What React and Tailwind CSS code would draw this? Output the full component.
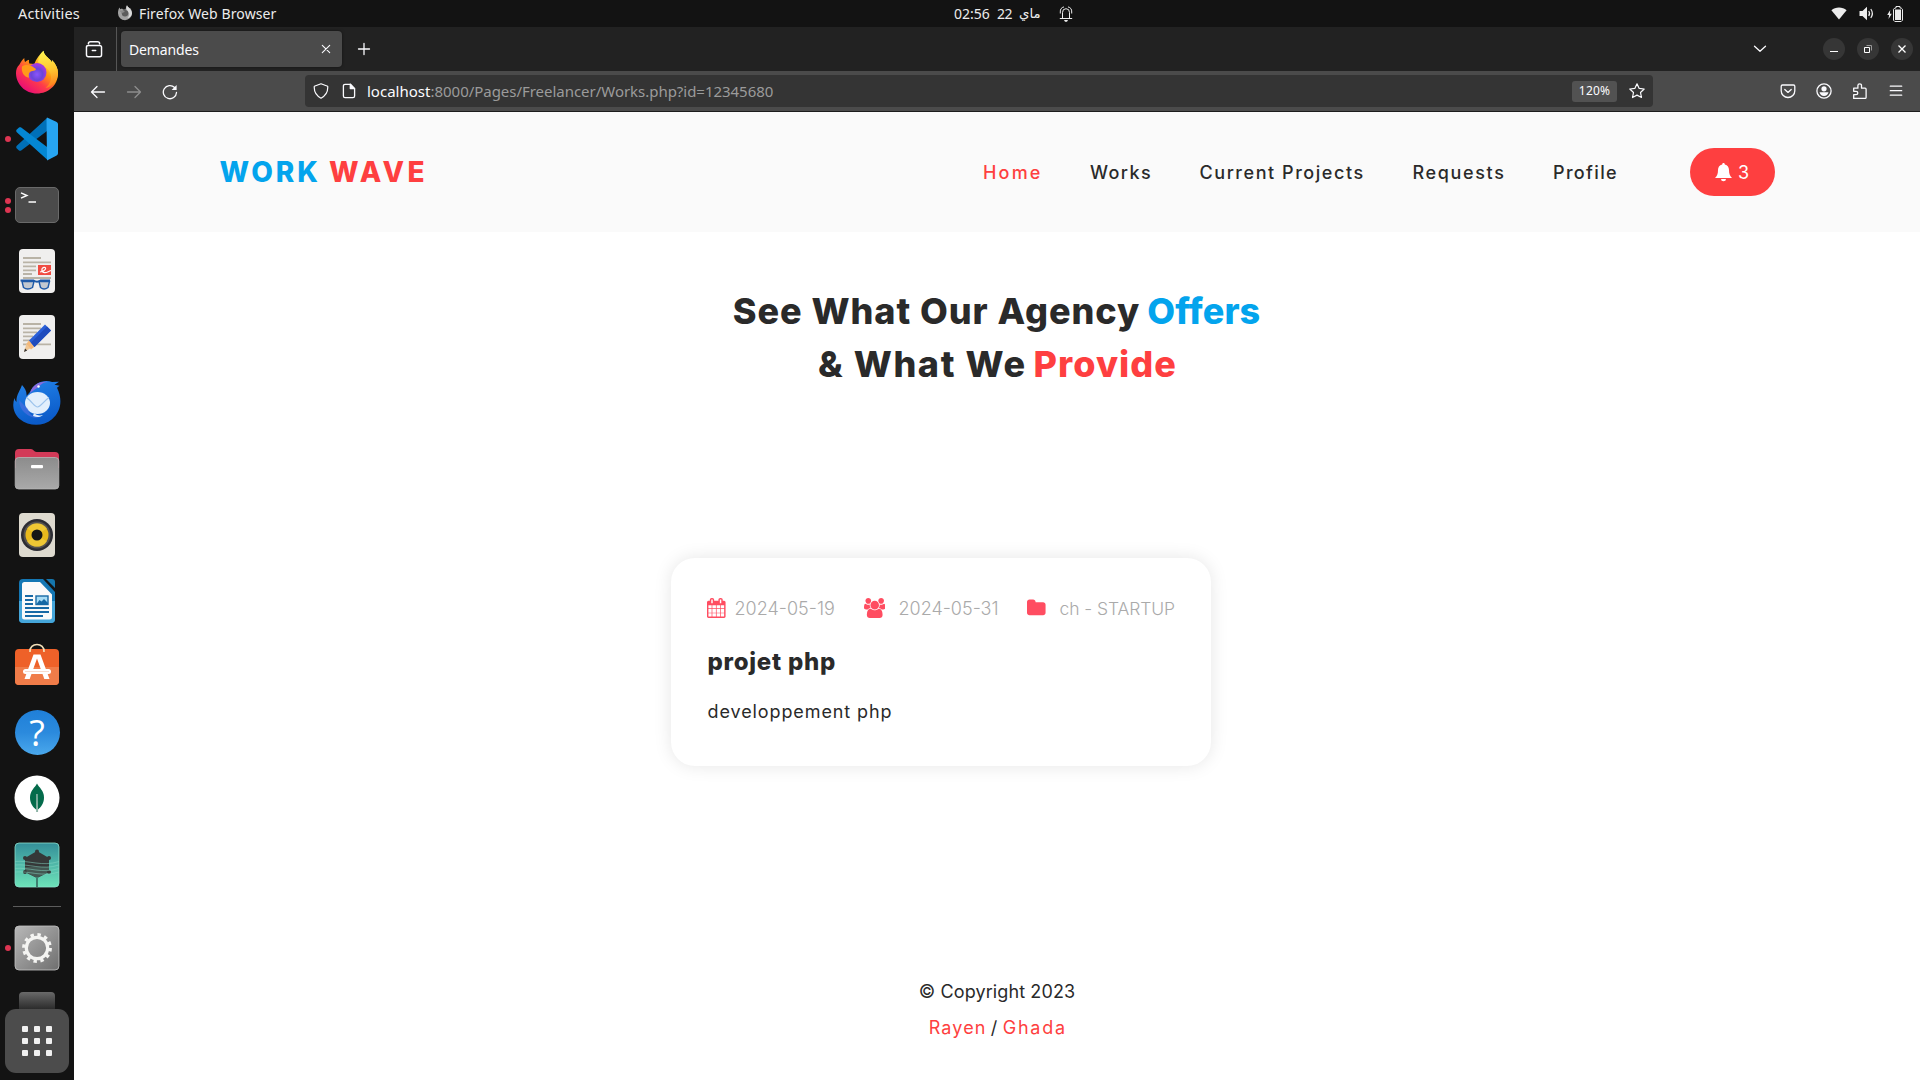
import React from "react";

const UI = "font-['Noto_Sans','DejaVu_Sans',sans-serif]";

function Line({ children, className = "", size = 16, w = 1.2 }) {
  return (
    <svg width={size} height={size} viewBox="0 0 16 16" fill="none" stroke="currentColor" strokeWidth={w} strokeLinecap="round" strokeLinejoin="round" className={"shrink-0 " + className}>
      {children}
    </svg>
  );
}

function TopBar() {
  return (
    <div className="relative flex h-[27px] w-full items-center bg-[#131313] text-[14px] leading-[27px] text-[#ececec] whitespace-nowrap">
      <span className="ml-[18px] w-[99px] text-[14.5px] tracking-[0.15px]">Activities</span>
      <svg width="16" height="16" viewBox="0 0 16 16" className="-mt-px shrink-0">
        <path d="M1.600 4.200 2.400 2.600l1 1.600 1.600-.6L6 4.600h2.600C9 2.600 9.400 1.300 10 .2c.5 1.500 1.600 2 2.500 3l.6-.3c1.300 1.700 1.900 3.300 1.900 5.200A7 7 0 0 1 1 8.200c0-1.400.1-2.700.6-4z" fill="#a2a2a2" />
        <path d="M10 .2c.5 1.500 1.600 2 2.500 3 1.900 2 2.500 4 2.500 5.500-.5 2.500-3 4.500-4.500 4.300 2.200-2 2.300-5 .5-6.500C9 5 9 2 10 .2z" fill="#dadada" />
        <circle cx="8" cy="8.200" r="3.200" fill="#5c5c5c" />
        <path d="M2.500 5.800c2-.7 4-.2 5.500.9-1.500 1-2.300.5-3 1.800z" fill="#8b8b8b" />
      </svg>
      <span className="ml-[6px] w-[815px] tracking-[0.11px]">Firefox Web Browser</span>
      <span className="w-[43px]">02:56</span>
      <span className="w-[22px] tracking-[-0.4px]">22</span>
      <span className="w-[40px] text-[13.3px] font-['DejaVu_Sans',sans-serif]">ماي</span>
      <svg width="14" height="16" viewBox="0 0 14 16" fill="none" stroke="#ececec" strokeWidth="1" className="shrink-0">
        <path d="M.8 12.500h12.400M3.500 12.500V6.500a3.500 3.800 0 0 1 7 0v6M1.300 7.500V6A4.700 4.900 0 0 1 5 .9M12.700 7.500V6A4.700 4.900 0 0 0 9 .9" />
        <path d="M5 14h4l-1 1.700H6z" fill="#ececec" stroke="none" />
      </svg>
      <div className="ml-auto flex items-center pr-[17px] text-[#ececec]">
        <svg width="16" height="13" viewBox="0 0 16 13" fill="currentColor"><path d="M.4 3.200C4.400-.5 11.600-.5 15.600 3.200L8 12.600z" /></svg>
        <svg width="16" height="15" viewBox="0 0 16 15" fill="currentColor" className="ml-[12px]">
          <path d="M.5 5h3L8 .8v13.400L3.500 10h-3z" />
          <path d="M9.700 5q1.800 2.500 0 5M11.800 3q3.200 4.500 0 9" fill="none" stroke="currentColor" strokeWidth="1.200" />
        </svg>
        <svg width="16" height="16" viewBox="0 0 16 16" fill="currentColor" className="ml-[12px]">
          <path d="M3.200 4 .2 9h1.900L1.500 13l3.300-5.300H2.900z" />
          <path d="M9 .5h4V2h1.200L15.500 3.300v10.900L14.200 15.500H7.800L6.500 14.200V3.300L7.800 2H9z" fill="none" stroke="currentColor" />
          <rect x="8" y="3.500" width="6" height="10.500" />
        </svg>
      </div>
    </div>
  );
}

function Firefox() {
  return (
    <svg width="44" height="44" viewBox="0 0 44 44" className="-mt-[2px]">
      <defs>
        <linearGradient id="ff1" x1=".85" y1=".1" x2=".2" y2=".95"><stop offset=".1" stopColor="#fff44f" /><stop offset=".4" stopColor="#ff980e" /><stop offset=".65" stopColor="#ff3b4a" /><stop offset="1" stopColor="#e60a79" /></linearGradient>
        <linearGradient id="ff2" x1=".5" y1="0" x2=".6" y2="1"><stop offset="0" stopColor="#fff350" /><stop offset=".5" stopColor="#ffc830" /><stop offset="1" stopColor="#ff7a1c" /></linearGradient>
        <radialGradient id="ff3" cx=".5" cy=".6"><stop offset="0" stopColor="#8a55fb" /><stop offset=".6" stopColor="#6a45d8" /><stop offset="1" stopColor="#a03ae0" /></radialGradient>
      </defs>
      <path d="M4.500 14.500C6 11.500 7.500 9.500 9.300 8c0 1.800.3 3 .8 4 1.300-1.100 2.600-1.800 4-2.200-.3 1.300-.2 2.600.2 3.600l5 .6C21 9 25 4 28.500.8c.5 4.200 3.500 6 5.800 8.200 1 .9 2 2.200 2.400 3.200.4-.8.4-1.400.2-2.200 4 4 6.100 8.500 6.100 13.500C43 35 33.500 43.500 22 43.500S1 34.500 1 23c0-3.200.8-6 3.500-8.500z" fill="url(#ff1)" />
      <path d="M28.500.8c.5 4.200 3.500 6 5.800 8.200 1 .9 2 2.200 2.400 3.200.4-.8.4-1.400.2-2.200 4 4 6.100 8.500 6.100 13.500-.6 8-6.500 13.500-12.500 14.500 5-4 7-10 4.500-15.500C33 17.500 27 16 23 12c1-5 3-8.800 5.500-11.200z" fill="url(#ff2)" />
      <circle cx="22" cy="22.500" r="9.500" fill="url(#ff3)" />
      <path d="M7 16.500c4-2.500 9-1.500 12.500 1.500 1.700.8 1.700 1.700.8 2.300-1.800.8-3.800.8-5 1.400-1.600 1-1.800 3.300-1.300 6C9 27 6 22 7 16.500z" fill="#ff9a1a" />
    </svg>
  );
}

function VSCode() {
  return (
    <svg width="44" height="44" viewBox="0 0 44 44">
      <path d="M31.500 1.500 1.800 28.800c-.8.8-.8 1.900 0 2.600l2.200 2c.6.6 1.500.6 2.200.1L36 11z" fill="#0070b8" />
      <path d="M32 42.500 1.800 15.200c-.8-.7-.8-1.900 0-2.600l2.200-2c.6-.6 1.500-.6 2.200-.1L36 33z" fill="#0487d3" />
      <path d="M31.500 1.500 32 .5l9.200 4.200c1.100.5 1.800 1.400 1.800 2.500v29c0 1.100-.7 2-1.800 2.500L32 43.400z" fill="#27a5f2" />
    </svg>
  );
}

function Terminal() {
  return (
    <div className="h-[36px] w-[44px] rounded-[5px] border border-[#6a6a6a] bg-[#4b4b4b]">
      <svg width="42" height="34" viewBox="0 0 42 34" fill="none" stroke="#fff" strokeWidth="1.400"><path d="M5 4.800l6 2.700-6 2.700M12.500 14h7.500" /></svg>
    </div>
  );
}

function Evince() {
  return (
    <svg width="44" height="46" viewBox="0 0 44 46">
      <rect x="4" y="1" width="36" height="44" rx="4" fill="#f0efee" />
      <path d="M8 10h18M8 14.300h28M8 18.300h13M8 22.300h13M8 26h9M8 30h28" stroke="#b9b3a6" strokeWidth="1.800" />
      <rect x="23" y="17" width="13" height="10" fill="#f04c42" />
      <path d="M25 24c6-1 7-5 4-4.600-3 .6-3 5.600 1 5.200 2 0 3-1 6-2" fill="none" stroke="#fff" strokeWidth="1.100" />
      <path d="M5.500 32.500h13q3.500 2.500 7 0h9.500" fill="none" stroke="#1e5aa8" strokeWidth="1.800" />
      <path d="M7 33.500h12l-1.500 6q-5 3-9 0zM24 33.500h10.500l-1.500 6q-4 3-7.500 0z" fill="#c3c9d0" stroke="#1e5aa8" strokeWidth="1.400" />
    </svg>
  );
}

function TextEditor() {
  return (
    <svg width="44" height="46" viewBox="0 0 44 46">
      <rect x="4" y="1" width="36" height="44" rx="4" fill="#f0efee" />
      <path d="M8 10h18M8 14.300h18M8 18.300h14M8 22.300h10M8 26.300h8M8 30.300h28" stroke="#b9b3a6" strokeWidth="1.800" />
      <path d="M9 38l2.500-8.500L16 34z" fill="#f0c795" />
      <path d="M11.500 29.500l3-3.500 6 6-4.500 3.500z" fill="#f5b878" />
      <path d="M9 38l1-3.500 2.200 2z" fill="#333" />
      <path d="M14 26.500 30 10.500l6 6L19.500 33z" fill="#2a5fd8" />
      <path d="M16 28.500 32 12.500l4 4L19.500 33z" fill="#1f4bbd" />
    </svg>
  );
}

function Thunderbird() {
  return (
    <svg width="50" height="48" viewBox="0 0 50 48">
      <defs><linearGradient id="tb" x1="0" y1="0" x2="0.3" y2="1"><stop offset="0" stopColor="#2384ea" /><stop offset="1" stopColor="#0b5bc9" /></linearGradient></defs>
      <path d="M10 6c3 3 5 7 4.500 11L18 13C22 3 33 0 40 3l7-.3-4.500 3 5 1-2.500 2c6 12 4 24-5 31.500-9 7.500-23 7.300-32 0C1 34 0 26 2.500 19c.5 2 1 3 2 4C4 16 8 12 10 6z" fill="url(#tb)" />
      <path d="M18 14c3-9 10-12 18-11-7 0-8 5-14 8z" fill="#8a6bde" />
      <ellipse cx="25.500" cy="24" rx="12.500" ry="11" fill="#e2effc" />
      <path d="M14.500 18.500c6 4.500 8 9.500 11 9.500s6.500-6 11.500-9.500" fill="none" stroke="#9cc3ec" strokeWidth="1.200" />
      <path d="M7 21c0 10 9 19 21 18-9-2-11-4-12-9z" fill="#4a6fe0" opacity=".7" />
      <path d="M22 34c2 2 5 3 9 2-2 2-6 3-10 1z" fill="#e2effc" />
      <circle cx="26.500" cy="7.500" r="1.200" fill="#fff" />
    </svg>
  );
}

function Files() {
  return (
    <svg width="46" height="42" viewBox="0 0 46 42">
      <defs><linearGradient id="fl" x1="0" y1="0" x2="0" y2="1"><stop offset="0" stopColor="#8c8c8c" /><stop offset="1" stopColor="#a9a9a9" /></linearGradient></defs>
      <path d="M1 5a4 4 0 0 1 4-4h12c2.500 0 3 3 5.500 3H41a4 4 0 0 1 4 4v12H1z" fill="#d33a58" />
      <rect x="1.200" y="9.500" width="43.600" height="31.500" rx="3.500" fill="url(#fl)" stroke="#b8b8b8" strokeWidth=".8" />
      <rect x="17" y="17" width="12" height="3.200" rx="1" fill="#fff" />
    </svg>
  );
}

function Rhythmbox() {
  return (
    <svg width="44" height="46" viewBox="0 0 44 46">
      <rect x="4" y="1" width="36" height="44" rx="4" fill="#dedacf" />
      <circle cx="22" cy="23" r="16" fill="#2c2c33" />
      <circle cx="22" cy="23" r="13.500" fill="#55524f" />
      <circle cx="22" cy="23" r="11.500" fill="#e9b91c" />
      <path d="M22 23 12 16.500a12 12 0 0 1 20 0zM22 23l10 6.500a12 12 0 0 1-20 0z" fill="#f6d64b" opacity=".5" />
      <circle cx="22" cy="23" r="5.500" fill="#161616" />
    </svg>
  );
}

function Writer() {
  return (
    <svg width="44" height="46" viewBox="0 0 44 46">
      <path d="M4 5a4 4 0 0 1 4-4h20l12 13v27a4 4 0 0 1-4 4H8a4 4 0 0 1-4-4z" fill="#1477b4" />
      <path d="M4 23h36v18a4 4 0 0 1-4 4H8a4 4 0 0 1-4-4z" fill="#45a6da" />
      <path d="M31 1h6a3 3 0 0 1 3 3v6z" fill="#1576ad" />
      <path d="M7 6.500A2.500 2.500 0 0 1 9.500 4H25l12 12.500V39a2.500 2.500 0 0 1-2.500 2.500h-25A2.500 2.500 0 0 1 7 39z" fill="#fafafa" />
      <path d="M10 18h8M10 22h8M10 26h8M10 30h24M10 34h24M10 38h18" stroke="#1769a5" strokeWidth="1.800" />
      <rect x="21" y="18" width="12" height="8.500" fill="#a8dcf5" stroke="#1769a5" strokeWidth="1.400" />
      <path d="M21.500 26l3-4 2 1.500 2.500-2.500 4 4v1z" fill="#1769a5" />
    </svg>
  );
}

function Software() {
  return (
    <svg width="46" height="46" viewBox="0 0 46 46" className="-mt-[6px]">
      <rect x="1" y="8" width="44" height="36" rx="4" fill="#ee6129" />
      <path d="M1 26h44v14a4 4 0 0 1-4 4H5a4 4 0 0 1-4-4z" fill="#f07c49" />
      <path d="M16 11c-1-10 15-10 14 0" fill="none" stroke="#f2dfb8" strokeWidth="1.600" />
      <path d="M19.500 13.500h7L35.500 38h-5.200L23 17.500 15.700 38h-5.200z" fill="#fff" />
      <rect x="9" y="28" width="28" height="5" rx="2.500" fill="#fff" />
      <path d="M11 30.500h24" stroke="#f5d3c3" strokeWidth=".8" />
    </svg>
  );
}

function Help() {
  return (
    <div className="mb-px flex size-[45px] items-center justify-center rounded-full bg-linear-to-b from-[#1f7fd8] via-[#2b8add] via-50% to-[#4aa8ec] text-[36px] leading-[44px] text-white font-['Open_Sans',sans-serif]">?</div>
  );
}

function Mongo() {
  return (
    <svg width="46" height="46" viewBox="0 0 46 46" className="-mt-[2px]">
      <circle cx="23" cy="23" r="22.500" fill="#fff" />
      <path d="M23 8.500c2 4 7 7 7 14 0 6-3 9.500-6 12h-2c-3-2.500-6-6-6-12 0-7 5-10 7-14z" fill="#046b4b" />
      <path d="M22.200 19h1.500l.4 18h-2z" fill="#8fb5a8" />
    </svg>
  );
}

function Compass() {
  return (
    <svg width="46" height="46" viewBox="0 0 46 46">
      <defs><linearGradient id="cp" x1="0" y1="0" x2="0" y2="1"><stop offset="0" stopColor="#348f99" /><stop offset="1" stopColor="#6de3b9" /></linearGradient></defs>
      <rect x="1" y="1" width="44" height="44" rx="4" fill="url(#cp)" stroke="#8ae0cd" strokeWidth=".8" />
      <path d="M23 9l12 7v14l-12 6-12-6V16z" fill="#353838" />
      <path d="M11 25h24v5l-12 6-12-6z" fill="#435752" />
      <circle cx="23" cy="9.500" r="2" fill="#353838" /><circle cx="11" cy="16" r="2" fill="#353838" /><circle cx="35" cy="16" r="2" fill="#353838" /><circle cx="11" cy="30" r="2" fill="#353838" /><circle cx="35" cy="30" r="2" fill="#353838" />
      <path d="M23 35v10" stroke="#3f7f70" strokeWidth="2" />
      <path d="M1 19.500C15 18 28 25 45 19.500M1 23C15 21.500 28 28.500 45 23M1 26.500C15 25 28 32 45 26.500M1 30C15 28.500 28 35.500 45 30" fill="none" stroke="#86d9c4" strokeWidth=".5" />
    </svg>
  );
}

function Settings() {
  return (
    <svg width="46" height="46" viewBox="0 0 46 46">
      <defs><linearGradient id="st" x1="0" y1="0" x2="1" y2="1"><stop offset="0" stopColor="#b8b8b8" /><stop offset="1" stopColor="#6f6f6f" /></linearGradient></defs>
      <rect x="1" y="1" width="44" height="44" rx="4" fill="url(#st)" stroke="#c4c4c4" strokeWidth=".8" />
      <circle cx="23" cy="23" r="13.300" fill="none" stroke="#f4f4f2" strokeWidth="3.200" strokeDasharray="3.400 3.564" />
      <circle cx="23" cy="23" r="10.700" fill="none" stroke="#f4f4f2" strokeWidth="3.200" />
    </svg>
  );
}

const dock = [
  [Firefox, 0], [VSCode, 1], [Terminal, 2], [Evince, 0], [TextEditor, 0], [Thunderbird, 0], [Files, 0],
  [Rhythmbox, 0], [Writer, 0], [Software, 0], [Help, 0], [Mongo, 0], [Compass, 0],
];

function DockItem({ Icon, dots }) {
  return (
    <div className="relative flex h-[66px] w-full shrink-0 items-center justify-center">
      {dots > 0 && (
        <div className="absolute inset-y-0 left-[5px] flex flex-col items-center justify-center gap-[3px]">
          {Array.from({ length: dots }, (_, i) => <span key={i} className="size-[6px] rounded-full bg-[#dd3552]" />)}
        </div>
      )}
      <Icon />
    </div>
  );
}

function Dock() {
  return (
    <div className="flex w-[74px] shrink-0 flex-col items-center bg-[#131313] pt-[13px]">
      {dock.map(([Icon, dots], i) => <DockItem key={i} Icon={Icon} dots={dots} />)}
      <div className="flex h-[17px] items-center pb-px"><div className="h-px w-[48px] bg-[#5c5c5c]" /></div>
      <DockItem Icon={Settings} dots={1} />
      <div className="mt-[11px] h-[17px] w-[36px] shrink-0 rounded-t-[4px] bg-linear-to-b from-[#6a6a6a] to-[#2c2c2c]" />
      <div className="grid size-[64px] shrink-0 grid-cols-3 content-center justify-center gap-[6px] rounded-[11px] bg-[#4c4c4c] px-[17px]">
        {Array.from({ length: 9 }, (_, i) => <span key={i} className="size-[6px] rounded-[1px] bg-[#f0f0f0]" />)}
      </div>
    </div>
  );
}

function WinButton({ children, className }) {
  return <div className={"flex size-[22px] shrink-0 items-center justify-center rounded-full bg-[#363636] " + className}>{children}</div>;
}

function TabBar() {
  return (
    <div className="flex h-[44px] items-center bg-[#222222] text-[#fbfbfe]">
      <div className="flex h-full w-[43px] items-center justify-center border-r border-[#565656] pr-[2px]">
        <Line size={18} w={1.3}><path d="M3 3.400q0-1.800 1.800-1.800h6.400q1.800 0 1.800 1.800M3 4.800h10q1.700 0 1.700 1.700v6.700q0 1.700-1.700 1.700H3q-1.700 0-1.700-1.700V6.500Q1.300 4.800 3 4.800zM6.500 9.300h3" /></Line>
      </div>
      <div className="ml-[4px] flex h-[36px] w-[221px] items-center rounded-[4px] bg-[#4b4b4b] pl-[8px] shadow-[0_0_3px_rgba(0,0,0,0.5)]">
        <span className="text-[14px] tracking-[-0.13px]">Demandes</span>
        <Line className="mr-[8px] ml-auto" w={1.1}><path d="M4.300 4.300l7.400 7.400M11.700 4.300l-7.400 7.400" /></Line>
      </div>
      <Line className="ml-[14px]" w={1.3}><path d="M8 2.500v11M2.500 8h11" /></Line>
      <div className="ml-auto flex items-center">
        <Line className="mr-[55px]" w={1.3}><path d="M2.500 5.300 8 10.300l5.500-5" /></Line>
        <WinButton className="mr-[12px]"><svg width="10" height="10" viewBox="0 0 10 10"><path d="M1 7.500h8" stroke="#fff" /></svg></WinButton>
        <WinButton className="mr-[12px]"><svg width="10" height="10" viewBox="0 0 10 10" fill="none"><path d="M1.500 3.500h5v5h-5z" stroke="#fff" /><path d="M3.500 1.500h5v5" stroke="#999" /></svg></WinButton>
        <WinButton className="mr-[7px]"><svg width="10" height="10" viewBox="0 0 10 10"><path d="M1.500 1.500l7 7M8.500 1.500l-7 7" stroke="#fff" strokeWidth="1.300" /></svg></WinButton>
      </div>
    </div>
  );
}

function NavBar() {
  return (
    <div className="flex h-[41px] items-center border-b border-[#1c1c1c] bg-[#4b4b4b] text-[#fbfbfe]">
      <Line className="mt-px ml-[16px]" w={1.3}><path d="M1.500 8h13M7 2.500 1.500 8 7 13.500" /></Line>
      <Line className="mt-px ml-[20px] text-[#8d8d8d]" w={1.3}><path d="M14.500 8h-13M9 2.500 14.500 8 9 13.500" /></Line>
      <Line className="mt-px ml-[20px]" w={1.3}><path d="M14.500 8.500A6.600 6.600 0 1 1 12.600 3.500" /><path d="M14.600 1v5H9.600z" fill="currentColor" stroke="none" /></Line>
      <div className="ml-[127px] flex h-[32px] w-[1348px] items-center rounded-[4px] bg-[#343434]">
        <Line className="ml-[8px]" w={1.2}><path d="M8 .8 14.700 3.200q.7 8-6.700 12Q.6 11.200 1.300 3.200z" /></Line>
        <Line className="ml-[12px]" w={1.3}><path d="M9.300 1.300H4q-1.600 0-1.600 1.600v10.200q0 1.600 1.600 1.600h8q1.600 0 1.600-1.600V5.600z" /><path d="M9.300 1.300v4.300h4.300z" fill="currentColor" /></Line>
        <div className="ml-[10px] flex text-[15px] whitespace-nowrap"><span className="w-[63.5px]">localhost</span><span className="tracking-[-0.03px] text-[#9b9b9b]">:8000/Pages/Freelancer/Works.php?id=12345680</span></div>
        <div className="ml-auto flex h-[21px] w-[45px] items-center justify-center rounded-[3px] bg-[#525252] text-[12px] tracking-[0.2px]">120%</div>
        <Line className="mr-[8px] ml-[12px]" w={1.2}><path d="M8 .8l2.200 4.600 5 .6-3.700 3.500 1 5L8 12.100l-4.500 2.400 1-5L.8 6l5-.6z" /></Line>
      </div>
      <div className="mr-[16px] ml-auto flex items-center gap-[20px]">
        <Line w={1.3}><path d="M2.500 2h11q1.300 0 1.300 1.300v4.400a6.800 6.800 0 0 1-13.600 0V3.300Q1.200 2 2.500 2zM4.800 6.500 8 9.400l3.200-2.900" /></Line>
        <Line w={1.3}><circle cx="8" cy="8" r="7.100" /><circle cx="8" cy="5.800" r="2.600" fill="currentColor" stroke="none" /><path d="M3.500 9.300h9q-.9 3.700-4.500 3.700t-4.500-3.700z" fill="currentColor" stroke="none" /></Line>
        <Line w={1.3}><path d="M1.700 5.200h4.200V2.600a1.800 1.800 0 0 1 3.600 0v2.600h3.600q1 0 1 1v8.200q0 1-1 1H1.700v-3.700h2.400a1.700 1.700 0 0 0 0-3.400H1.700z" /></Line>
        <Line w={1.3}><path d="M2.300 3.200h11.400M2.300 7.700h11.400M2.300 12.200h11.400" /></Line>
      </div>
    </div>
  );
}

function SiteHeader() {
  return (
    <header className="flex h-[120px] items-center bg-[#fafafa] pl-[145.5px] whitespace-nowrap">
      <div className="flex w-[763.5px] text-[28px] font-extrabold">
        <span className="w-[109.5px] tracking-[3px] text-[#03a4ed]">WORK</span>
        <span className="tracking-[3.4px] text-[#fe3f40]">WAVE</span>
      </div>
      <nav className="flex pt-px text-[18px] font-medium text-[#2a2a2a]">
        <a className="w-[107px] tracking-[2.2px] text-[#fe3f40]">Home</a>
        <a className="w-[109.5px] tracking-[1.4px]">Works</a>
        <a className="w-[213px] tracking-[1.55px]">Current Projects</a>
        <a className="w-[140.5px] tracking-[1.65px]">Requests</a>
        <a className="w-[137px] tracking-[1.35px]">Profile</a>
      </nav>
      <button className="flex h-[48px] w-[85px] items-center rounded-[24px] bg-[#fe3f40] pl-[25px] text-[18px] text-white">
        <svg width="17" height="19" viewBox="0 0 17 19" fill="currentColor"><path d="M8.500 0c.8 0 1.300.6 1.300 1.400C12.700 2 14 4.500 14 7c0 4 1 6.300 3 8H0c2-1.700 3-4 3-8 0-2.500 1.300-5 4.200-5.600C7.200.6 7.700 0 8.500 0zM6 16h5a2.500 2.300 0 0 1-5 0z" /></svg>
        <span className="ml-[6px] pt-px">3</span>
      </button>
    </header>
  );
}

function Fa({ w, size, children }) {
  return <svg width={(w / 1792) * size} height={size} viewBox={`0 0 ${w} 1792`} fill="#ff4d61" className="shrink-0">{children}</svg>;
}

function ProjectCard() {
  return (
    <article className="mt-[167px] ml-[597px] h-[208px] w-[540px] rounded-[24px] bg-white px-[36px] pt-[36px] shadow-[0_0_18px_rgba(0,0,0,0.1)]">
      <div className="flex h-[27px] items-center text-[18px] leading-[27px] font-light whitespace-nowrap text-[#aaaaaa]">
        <Fa w={1664} size={20}><path d="M128 1664h288v-288h-288v288zm352 0h320v-288h-320v288zm-352-352h288v-320h-288v320zm352 0h320v-320h-320v320zm-352-384h288v-288h-288v288zm736 736h320v-288h-320v288zm-384-736h320v-288h-320v288zm768 736h288v-288h-288v288zm-384-352h320v-320h-320v320zm-352-864v-288q0-13-9.500-22.500t-22.500-9.500h-64q-13 0-22.500 9.500t-9.500 22.500v288q0 13 9.500 22.500t22.500 9.500h64q13 0 22.500-9.500t9.500-22.500zm736 864h288v-320h-288v320zm-384-384h320v-288h-320v288zm384 0h288v-288h-288v288zm32-480v-288q0-13-9.500-22.500t-22.500-9.500h-64q-13 0-22.500 9.500t-9.500 22.500v288q0 13 9.500 22.500t22.500 9.500h64q13 0 22.500-9.500t9.500-22.500zm384-64v1280q0 52-38 90t-90 38h-1408q-52 0-90-38t-38-90v-1280q0-52 38-90t90-38h128v-96q0-66 47-113t113-47h64q66 0 113 47t47 113v96h384v-96q0-66 47-113t113-47h64q66 0 113 47t47 113v96h128q52 0 90 38t38 90z" /></Fa>
        <span className="ml-[9px] w-[130px] pt-[2px]">2024-05-19</span>
        <Fa w={1920} size={20}><path d="M593 896q-162 5-265 128h-134q-82 0-138-40.500t-56-118.500q0-353 124-353 6 0 43.500 21t97.500 42.500 119 21.500q67 0 133-23-5 37-5 66 0 139 81 256zm1071 637q0 120-73 189.500t-194 69.500h-874q-121 0-194-69.500t-73-189.500q0-53 3.500-103.500t14-109 26.500-108.500 43-97.500 62-81 85.500-53.500 111.500-20q10 0 43 21.500t73 48 107 48 135 21.500 135-21.500 107-48 73-48 43-21.500q61 0 111.500 20t85.500 53.500 62 81 43 97.500 26.500 108.500 14 109 3.500 103.500zm-1024-1277q0 106-75 181t-181 75-181-75-75-181 75-181 181-75 181 75 75 181zm704 384q0 159-112.500 271.500t-271.500 112.500-271.500-112.500-112.500-271.500 112.500-271.500 271.500-112.500 271.500 112.500 112.500 271.500zm576 225q0 78-56 118.500t-138 40.500h-134q-103-123-265-128 81-117 81-256 0-29-5-66 66 23 133 23 59 0 119-21.500t97.500-42.500 43.500-21q124 0 124 353zm-128-609q0 106-75 181t-181 75-181-75-75-181 75-181 181-75 181 75 75 181z" /></Fa>
        <span className="ml-[13.5px] w-[130px] pt-[2px]">2024-05-31</span>
        <Fa w={1664} size={20}><path d="M1664 608v704q0 92-66 158t-158 66h-1216q-92 0-158-66t-66-158v-960q0-92 66-158t158-66h320q92 0 158 66t66 158v32h672q92 0 158 66t66 158z" /></Fa>
        <span className="ml-[13.5px] pt-[2px] text-[17.5px] tracking-[-0.08px]">ch - STARTUP</span>
      </div>
      <h2 className="mt-[23px] ml-[0.5px] text-[24px] leading-[36px] font-extrabold tracking-[0.75px] text-[#2a2a2a]">projet php</h2>
      <p className="mt-[18px] ml-[0.5px] text-[18px] leading-[27px] tracking-[0.9px] text-[#2a2a2a]">developpement php</p>
    </article>
  );
}

export default function App() {
  return (
    <div className={"flex h-[1080px] w-[1920px] flex-col overflow-hidden bg-[#131313] " + UI}>
      <TopBar />
      <div className="flex min-h-0 flex-1">
        <Dock />
        <div className="flex flex-1 flex-col">
          <TabBar />
          <NavBar />
          <main className="flex-1 bg-white font-[Inter,sans-serif]">
            <SiteHeader />
            <h1 className="mt-[53px] text-[36px] leading-[53px] font-extrabold whitespace-nowrap text-[#2a2a2a]">
              <div className="flex justify-center pr-[1px]"><span className="w-[414.5px] tracking-[0.95px]">See What Our Agency</span><span className="w-[113px] tracking-[0.1px] text-[#03a4ed]">Offers</span></div>
              <div className="flex justify-center"><span className="w-[215.5px] tracking-[1.6px]">&amp; What We</span><span className="w-[142.5px] tracking-[1.05px] text-[#fe3f40]">Provide</span></div>
            </h1>
            <ProjectCard />
            <footer className="mt-[208px] text-center text-[18px] leading-[36px] text-[#2a2a2a]">
              <p className="tracking-[0.11px]">© Copyright 2023</p>
              <p className="flex justify-center text-left"><a className="w-[62px] tracking-[1.1px] text-[#fe3f40]">Rayen</a><span className="w-[12px]">/</span><a className="w-[62.5px] tracking-[1.75px] text-[#fe3f40]">Ghada</a></p>
            </footer>
          </main>
        </div>
      </div>
    </div>
  );
}
